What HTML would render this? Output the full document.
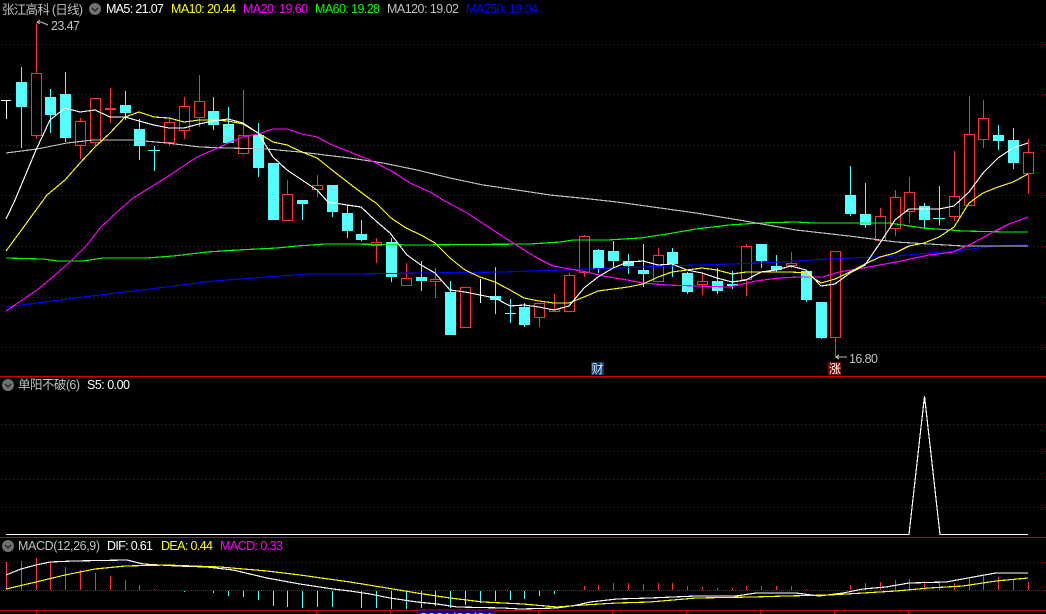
<!DOCTYPE html>
<html><head><meta charset="utf-8"><title>张江高科</title>
<style>
html,body{margin:0;padding:0;background:#000;width:1046px;height:614px;overflow:hidden}
svg{display:block}
text{font-family:"Liberation Sans","Noto Sans CJK SC",sans-serif;font-size:12.500px}
.l{fill:none;stroke-width:1;shape-rendering:crispEdges}
.m{fill:none;stroke-width:1.150;shape-rendering:crispEdges}
.g{stroke:#b00000;stroke-dasharray:1 3;shape-rendering:crispEdges;fill:none}
</style></head><body>
<svg width="1046" height="614" viewBox="0 0 1046 614" xmlns="http://www.w3.org/2000/svg">
<rect width="1046" height="614" fill="#000"/>
<!-- grids -->
<path class="g" d="M1 44.500H1046M1 94.500H1046M1 145.500H1046M1 195.500H1046M1 246.500H1046M1 297.500H1046M1 347.500H1046M1 424.500H1046M1 451.500H1046M1 479.500H1046M1 507.500H1046M1 562.500H1046"/>
<path d="M1 590.500H1046" stroke="#d00000" stroke-dasharray="1 1" style="shape-rendering:crispEdges"/>
<path d="M0 376.500H1046M0 537.500H1046M0 610.500H1046" stroke="#c80000" fill="none" style="shape-rendering:crispEdges"/>
<path d="M36.500 611V614M316.500 611V614M390.500 611V614M538.500 611V614M612.500 611V614M686.500 611V614M760.500 611V614M834.500 611V614M908.500 611V614" stroke="#c80000" style="shape-rendering:crispEdges"/>
<!-- wicks -->
<path class="l" stroke="#FF3232" d="M36.500 23V73M36.500 136V139M80.500 118V121M80.500 146V159M95.500 143V147M110.500 88V123M169.500 118V122M169.500 143V146M184.500 97V106M184.500 131V139M199.500 75V101M199.500 118V127M243.500 90V135M243.500 154V155M287.500 180V194M317.500 175V185M317.500 190V197M376.500 238V242M376.500 245V263M406.500 263V278M435.500 268V279M435.500 281V298M539.500 318V327M554.500 294V309M569.500 273V275M584.500 235V236M584.500 273V277M658.500 248V255M702.500 272V281M702.500 285V295M746.500 244V246M746.500 280V296M791.500 252V263M791.500 265V268M835.500 338V358M880.500 208V216M895.500 190V197M895.500 229V236M909.500 177V192M909.500 212V223M954.500 151V196M954.500 217V221M969.500 96V134M983.500 100V118M983.500 140V148M1028.500 139V152M1028.500 174V194"/>
<path class="l" stroke="#54FFFF" d="M21.500 67V148M50.500 89V133M65.500 72V142M125.500 91V120M139.500 119V160M154.500 146V171M148 150.500H160M213.500 97V130M228.500 107V124M258.500 123V177M302.500 204V220M332.500 212V217M347.500 205V238M361.500 220V241M391.500 238V282M421.500 261V291M450.500 281V292M495.500 267V314M510.500 299V323M505 313.500H516M524.500 303V327M598.500 249V273M613.500 241V267M628.500 254V274M643.500 244V287M672.500 248V277M687.500 272V294M717.500 268V294M732.500 271V289M761.500 261V268M776.500 255V272M806.500 300V302M821.500 338V339M850.500 166V216M865.500 183V228M924.500 203V229M939.500 186V225M933 218.500H945M998.500 125V150M1013.500 128V169"/>
<path class="l" stroke="#ffffff" d="M6.500 100V119M1 100.500H11M480.500 279V303"/>
<!-- cyan bodies -->
<g fill="#54FFFF" style="shape-rendering:crispEdges">
<rect x="16" y="82" width="11" height="25"/><rect x="45" y="97" width="11" height="18"/><rect x="60" y="94" width="11" height="44"/><rect x="120" y="105" width="11" height="8"/><rect x="134" y="129" width="11" height="17"/><rect x="208" y="111" width="11" height="14"/><rect x="223" y="124" width="11" height="19"/><rect x="253" y="135" width="11" height="33"/><rect x="268" y="163" width="11" height="57"/><rect x="297" y="200" width="11" height="4"/><rect x="327" y="185" width="11" height="27"/><rect x="342" y="213" width="11" height="18"/><rect x="356" y="234" width="11" height="6"/><rect x="386" y="242" width="11" height="35"/><rect x="416" y="277" width="11" height="4"/><rect x="445" y="292" width="11" height="43"/><rect x="490" y="296" width="11" height="4"/><rect x="519" y="307" width="11" height="18"/><rect x="593" y="250" width="11" height="19"/><rect x="608" y="251" width="11" height="10"/><rect x="623" y="261" width="11" height="5"/><rect x="638" y="270" width="11" height="4"/><rect x="667" y="252" width="11" height="12"/><rect x="682" y="273" width="11" height="19"/><rect x="712" y="281" width="11" height="10"/><rect x="727" y="284" width="11" height="2"/><rect x="756" y="244" width="11" height="17"/><rect x="771" y="266" width="11" height="4"/><rect x="801" y="271" width="11" height="29"/><rect x="816" y="302" width="11" height="36"/><rect x="845" y="195" width="11" height="19"/><rect x="860" y="214" width="11" height="11"/><rect x="919" y="206" width="11" height="14"/><rect x="993" y="135" width="11" height="6"/><rect x="1008" y="140" width="11" height="23"/>
</g>
<!-- red bodies -->
<g fill="#000" stroke="#FF3232" style="shape-rendering:crispEdges">
<rect x="31.500" y="73.500" width="10" height="62"/><rect x="75.500" y="121.500" width="10" height="24"/><rect x="90.500" y="98.500" width="10" height="44"/><rect x="105.500" y="108.500" width="10" height="1"/><rect x="164.500" y="122.500" width="10" height="20"/><rect x="179.500" y="106.500" width="10" height="24"/><rect x="194.500" y="101.500" width="10" height="16"/><rect x="238.500" y="135.500" width="10" height="18"/><rect x="282.500" y="194.500" width="10" height="26"/><rect x="312.500" y="185.500" width="10" height="4"/><rect x="371.500" y="242.500" width="10" height="3"/><rect x="401.500" y="278.500" width="10" height="7"/><rect x="430.500" y="279.500" width="10" height="2"/><rect x="460.500" y="287.500" width="10" height="40"/><rect x="534.500" y="303.500" width="10" height="14"/><rect x="549.500" y="309.500" width="10" height="2"/><rect x="564.500" y="275.500" width="10" height="36"/><rect x="579.500" y="236.500" width="10" height="36"/><rect x="653.500" y="255.500" width="10" height="26"/><rect x="697.500" y="281.500" width="10" height="3"/><rect x="741.500" y="246.500" width="10" height="33"/><rect x="786.500" y="263.500" width="10" height="2"/><rect x="830.500" y="251.500" width="10" height="86"/><rect x="875.500" y="216.500" width="10" height="24"/><rect x="890.500" y="197.500" width="10" height="31"/><rect x="904.500" y="192.500" width="10" height="19"/><rect x="949.500" y="196.500" width="10" height="20"/><rect x="964.500" y="134.500" width="10" height="71"/><rect x="978.500" y="118.500" width="10" height="21"/><rect x="1023.500" y="152.500" width="10" height="21"/>
</g>
<!-- moving averages -->
<polyline class="m" stroke="#0000FF" points="6,307 83,297 150,289 213,281 267,277 310,274 350,274 427,273 503,272 563,270 617,268 696,265 763,263 829,259 896,256 963,250 996,246 1028,245"/>
<polyline class="m" stroke="#00FF00" points="6,258 43,259 58,261 83,261 103,258 147,258 173,256 207,252 237,250 277,248 297,246 325,244 350,244 413,245 530,244 560,242 573,240 607,240 640,238 667,234 696,229 729,225 759,223 796,222 813,223 859,223 889,223 923,228 963,231 1006,232 1028,232"/>
<polyline class="m" stroke="#C0C0C0" points="6,153 37,149 67,143 93,140 133,140 167,143 200,147 227,148 267,149 300,152 333,156 350,158 383,163 417,170 450,178 483,185 517,190 550,195 590,199 617,202 696,213 739,220 796,230 849,236 896,242 929,244 963,246 1028,246"/>
<polyline class="m" stroke="#FF00FF" points="6,311 37,290 55,275 70,262 87,245 100,228 117,212 133,198 167,177 197,157 213,150 228,143 243,137 258,134 273,129 287,129 302,134 317,137 332,145 350,152 370,160 393,172 410,183 430,192 443,200 467,213 493,230 513,243 537,258 553,266 570,269 587,272 603,276 627,280 643,283 667,285 696,286 729,287 756,281 779,278 799,277 823,277 839,272 863,268 896,262 929,255 953,252 973,243 993,232 1009,224 1028,217"/>
<polyline class="m" stroke="#FFFF00" points="6,251 20,232 36,210 47,195 65,180 80,163 95,147 110,133 125,117 139,112 154,117 169,118 184,122 199,120 213,120 228,121 243,124 258,133 273,142 287,145 302,152 317,158 332,170 350,184 370,199 376,203 391,218 406,228 421,235 435,243 450,258 465,270 480,277 495,282 510,290 524,298 539,301 554,303 569,303 584,297 598,291 613,289 628,287 643,284 658,277 672,272 687,270 702,268 717,270 732,274 746,272 761,272 776,272 791,272 806,273 821,283 835,279 850,272 865,264 880,257 895,253 909,246 924,243 939,237 954,227 969,203 983,193 998,187 1013,182 1028,174"/>
<polyline class="m" stroke="#FFFFFF" points="6,219 15,200 36,150 50,120 65,108 80,112 95,110 110,117 125,117 139,121 154,125 169,128 184,128 199,124 213,121 228,119 243,123 258,133 273,157 287,170 302,180 317,190 328,202 347,205 361,207 376,221 390,233 407,255 421,265 435,273 450,290 465,292 480,295 495,298 510,306 524,305 539,307 554,310 569,306 584,288 598,277 613,268 628,262 643,261 658,265 672,264 687,270 702,273 717,278 732,282 746,280 761,272 776,270 791,266 806,270 821,286 835,284 850,273 865,265 880,243 895,220 909,209 924,209 939,209 954,206 969,192 983,173 998,158 1013,148 1028,143"/>
<!-- high/low labels -->
<path d="M37 22H41M37 22L40 20M37 22L40 24M41 22L48 25" stroke="#C0C0C0" fill="none"/>
<text x="51" y="30" fill="#C0C0C0" textLength="29">23.47</text>
<path d="M836 357H847M836 357L839 355M836 357L839 359" stroke="#C0C0C0" fill="none" style="shape-rendering:crispEdges"/>
<text x="849" y="363" fill="#C0C0C0" textLength="29">16.80</text>
<!-- badges -->
<rect x="591" y="362" width="13" height="13" fill="#0A3A6C"/>
<text x="591.500" y="373" fill="#DCE8F4" style="font-size:12px">财</text>
<rect x="828" y="362" width="13" height="13" rx="1" fill="#7A0808"/>
<text x="829" y="373" fill="#FFFFFF" style="font-size:12px">涨</text>
<!-- header -->
<text x="2" y="14" fill="#C0C0C0" textLength="81">张江高科 (日线)</text>
<circle cx="95" cy="9" r="6" fill="#707070"/><path d="M92 8L95 11L98 8" stroke="#2a2a2a" stroke-width="1.500" fill="none"/>
<text x="106" y="13" fill="#FFFFFF" textLength="58">MA5: 21.07</text>
<text x="171" y="13" fill="#FFFF00" textLength="65">MA10: 20.44</text>
<text x="243" y="13" fill="#FF00FF" textLength="65">MA20: 19.60</text>
<text x="315" y="13" fill="#00FF00" textLength="65">MA60: 19.28</text>
<text x="387" y="13" fill="#C0C0C0" textLength="72">MA120: 19.02</text>
<text x="466" y="13" fill="#0000FF" textLength="72">MA250: 19.04</text>
<!-- middle indicator -->
<circle cx="8" cy="385" r="6" fill="#707070"/><path d="M5 384L8 387L11 384" stroke="#2a2a2a" stroke-width="1.500" fill="none"/>
<text x="18" y="389" fill="#C0C0C0" textLength="62">单阳不破(6)</text>
<text x="87" y="389" fill="#FFFFFF" textLength="43">S5: 0.00</text>
<polyline fill="none" stroke="#fff" stroke-width="1.150" style="shape-rendering:crispEdges" points="6,534.500 909,534.500 924.500,396 940,534.500 1028,534.500"/>
<!-- MACD -->
<circle cx="8" cy="546" r="6" fill="#707070"/><path d="M5 545L8 548L11 545" stroke="#2a2a2a" stroke-width="1.500" fill="none"/>
<text x="18" y="550" fill="#C0C0C0" textLength="82">MACD(12,26,9)</text>
<text x="107" y="550" fill="#FFFFFF" textLength="46">DIF: 0.61</text>
<text x="161" y="550" fill="#FFFF00" textLength="52">DEA: 0.44</text>
<text x="220" y="550" fill="#FF00FF" textLength="63">MACD: 0.33</text>
<path class="l" stroke="#FF3232" d="M6.500 562V590M21.500 561V590M36.500 558V590M50.500 562V590M65.500 567V590M80.500 570V590M95.500 573V590M110.500 576V590M125.500 580V590M139.500 585V590M154.500 589V590M584.500 586V590M598.500 585V590M613.500 583V590M628.500 583V590M643.500 584V590M658.500 583V590M672.500 583V590M687.500 586V590M702.500 587V590M717.500 588V590M732.500 588V590M746.500 586V590M761.500 586V590M776.500 586V590M791.500 586V590M806.500 589V590M850.500 585V590M865.500 583V590M880.500 582V590M895.500 580V590M909.500 579V590M924.500 581V590M939.500 583V590M954.500 583V590M969.500 579V590M983.500 576V590M998.500 577V590M1013.500 579V590M1028.500 582V590"/>
<path class="l" stroke="#54FFFF" d="M184.500 591V592M213.500 591V593M228.500 591V596M243.500 591V597M258.500 591V600M273.500 591V606M287.500 591V607M302.500 591V608M317.500 591V607M332.500 591V607M361.500 591V608M376.500 591V608M391.500 591V609M406.500 591V609M421.500 591V608M435.500 591V606M450.500 591V608M465.500 591V605M480.500 591V603M495.500 591V601M510.500 591V600M524.500 591V599M539.500 591V596M554.500 591V594"/>
<polyline class="m" stroke="#FFFFFF" points="6,575 21,569 36,565 50,562 73,561 127,560 143,564 177,566 207,567 233,570 267,578 300,584 333,589 350,591 370,594 390,598 417,602 437,604 457,607 503,608 520,609 557,608 577,605 590,602 617,599 650,598 696,596 736,596 756,593 796,593 819,596 843,593 863,589 886,587 909,583 946,582 979,576 996,573 1028,573"/>
<polyline class="m" stroke="#FFFF00" points="6,589 36,582 65,575 95,569 125,566 167,565 220,567 267,571 300,575 350,582 393,589 417,593 450,598 483,602 523,604 557,607 583,605 617,603 650,602 696,598 753,597 786,596 829,595 863,593 896,591 929,588 963,586 996,581 1028,578"/>
<!-- date box -->
<rect x="417" y="610" width="78" height="4" fill="#0000A0" stroke="#c80000" stroke-width="1" style="shape-rendering:crispEdges"/>
<text x="420" y="622" fill="#E0E0E0" textLength="72">2021/09/24</text>
</svg>
</body></html>
